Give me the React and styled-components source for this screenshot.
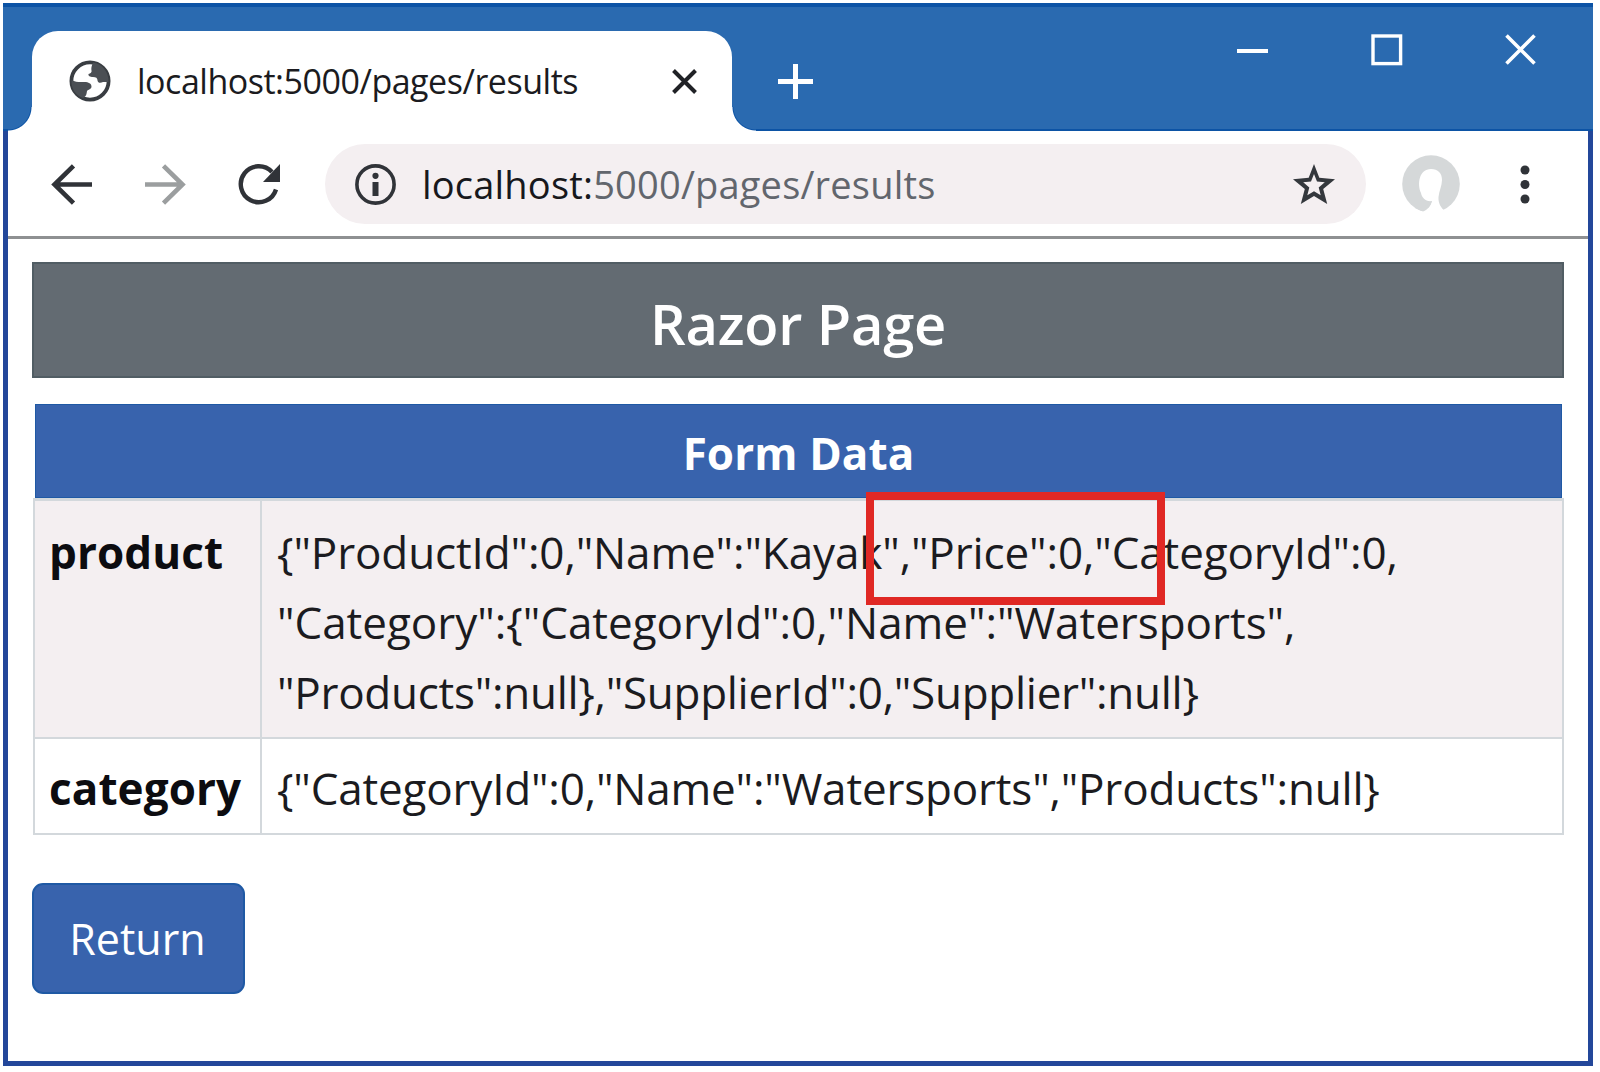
import React from "react";
import styled, { createGlobalStyle } from "styled-components";

const GlobalStyle = createGlobalStyle`
  * { box-sizing: border-box; }
  body {
    margin: 0;
    background: #fff;
    font-family: "Open Sans", "Noto Sans", sans-serif;
    color: #1b1b20;
  }
`;

const Desktop = styled.div`
  width: 1600px;
  height: 1072px;
  padding: 3px 7px 6px 3px;
  overflow: hidden;
`;

const Window = styled.div`
  display: flex;
  flex-direction: column;
  height: 100%;
  border: 5px solid #23479a;
  border-top: 0;
  background: #fff;
`;

const TitleBar = styled.header`
  display: flex;
  align-items: flex-start;
  height: 128px;
  margin: 0 -5px;
  padding: 24px 57px 0 29px;
  background: #2a6ab0;
  border-top: 4px solid #0c53a5;
  border-bottom: 2px solid #0c53a5;
`;

const Tab = styled.div`
  position: relative;
  display: flex;
  align-items: center;
  width: 700px;
  height: 100px;
  padding: 0 35px 0 37px;
  background: #fff;
  border-radius: 26px 26px 0 0;

  &::before,
  &::after {
    content: "";
    position: absolute;
    bottom: 0;
    width: 24px;
    height: 24px;
  }
  &::before {
    right: 100%;
    background: radial-gradient(circle at 0 0, #2a6ab0 22px, #0c53a5 23px, #fff 24px);
  }
  &::after {
    left: 100%;
    background: radial-gradient(circle at 100% 0, #2a6ab0 22px, #0c53a5 23px, #fff 24px);
  }
`;

const TabTitle = styled.span`
  flex: 1;
  margin-left: 26px;
  font-size: 34px;
  line-height: 46px;
  letter-spacing: -0.48px;
  white-space: nowrap;
`;

const Icon = styled.svg`
  display: block;
  flex: none;
  width: ${(p) => p.$w}px;
  height: ${(p) => p.$h || p.$w}px;
  overflow: visible;
`;

const NewTab = styled.div`
  margin: 32px 0 0 45px;
`;

const Controls = styled.div`
  display: flex;
  gap: 103px;
  margin: 3px 0 0 auto;
`;

const Toolbar = styled.nav`
  display: flex;
  align-items: center;
  height: 108px;
  padding: 1px 58px 0 43px;
  border-bottom: 3px solid #8e9092;
`;

const NavButtons = styled.div`
  display: flex;
  align-items: center;
  gap: 53px;
  width: 274px;
`;

const Omnibox = styled.div`
  display: flex;
  align-items: center;
  width: 1041px;
  height: 80px;
  padding: 0 31px 0 30px;
  border-radius: 40px;
  background: #f4eff1;
`;

const Url = styled.span`
  flex: 1;
  margin-left: 26px;
  font-size: 38px;
  line-height: 52px;
  letter-spacing: 0.2px;
  color: #62666d;
  white-space: nowrap;
`;

const Host = styled.span`
  color: #17181c;
`;

const AvatarSlot = styled.div`
  margin: 0 auto 0 36px;
`;

const Page = styled.main`
  flex: 1;
  padding: 23px 24px 0;
`;

const Banner = styled.h1`
  display: flex;
  align-items: center;
  justify-content: center;
  height: 116px;
  margin: 0 0 26px;
  padding-top: 5px;
  border: 2px solid #515d64;
  background: #636b72;
  color: #fff;
  font-size: 56px;
  font-weight: 600;
  line-height: 76px;
  letter-spacing: -0.2px;
`;

const DataTable = styled.section`
  position: relative;
`;

const TableHeader = styled.h2`
  display: flex;
  align-items: center;
  justify-content: center;
  height: 94px;
  margin: 0 2px 0 3px;
  padding-top: 3px;
  background: #3863ad;
  border: 1px solid #1f59a4;
  color: #fff;
  font-size: 44px;
  font-weight: 700;
  line-height: 60px;
  letter-spacing: 0.1px;
`;

const Row = styled.div`
  display: grid;
  grid-template-columns: 227px 1fr;
  height: ${(p) => p.$height}px;
  margin-left: 1px;
  border: 2px solid #d3d8dc;
  border-top-width: ${(p) => (p.$first ? "3px" : "0")};
  background: ${(p) => (p.$first ? "#f4eff1" : "#fff")};
`;

const Key = styled.div`
  padding: ${(p) => p.$top}px 0 0 14px;
  border-right: 2px solid #d3d8dc;
  color: #0c0c10;
  font-size: 44px;
  font-weight: 700;
  line-height: 70px;
  letter-spacing: 0.1px;
`;

const Value = styled.div`
  padding: ${(p) => p.$top}px 0 0 15px;
  font-size: 44px;
  line-height: 70px;
  white-space: nowrap;
`;

const Line = styled.div`
  letter-spacing: ${(p) => p.$track}px;
`;

const Highlight = styled.div`
  position: absolute;
  left: 834px;
  top: 88px;
  width: 299px;
  height: 113px;
  border: 8px solid #e02824;
`;

const ReturnButton = styled.button`
  display: block;
  width: 213px;
  height: 111px;
  margin: 48px 0 0;
  padding: 1px 2px 0 0;
  border: 2px solid #1f59a4;
  border-radius: 11px;
  background: #3863ad;
  color: #fff;
  font: 400 43px/60px "Open Sans", "Noto Sans", sans-serif;
`;

const ROWS = [
  {
    key: "product",
    height: 241,
    top: 16,
    lines: [
      ['{"ProductId":0,"Name":"Kayak","Price":0,"CategoryId":0,', -0.12],
      ['"Category":{"CategoryId":0,"Name":"Watersports",', -0.03],
      ['"Products":null},"SupplierId":0,"Supplier":null}', -0.27],
    ],
  },
  {
    key: "category",
    height: 96,
    top: 14,
    lines: [['{"CategoryId":0,"Name":"Watersports","Products":null}', -0.18]],
  },
];

const Globe = () => (
  <Icon $w={42} viewBox="0 0 42 42">
    <circle cx="21" cy="21" r="18.6" fill="#fff" stroke="#393d42" strokeWidth="3.8" />
    <path
      d="M24 2.5 C22.5 6 22 8.5 22.5 10.5 C23 12.5 21.5 13.5 19.5 14 C19 16 21 17 24 17 C27 17 28.5 18 28.5 20.5 C29 23.5 32 23 34 22 L39.5 22 C40 12 33 3.5 24 2.5 Z"
      fill="#4b4f54"
    />
    <path
      d="M2.5 20 C7 22.5 11 22 15.5 22 C19.5 22 22.5 23.5 22.5 26.5 C22.5 29.5 19 29.5 18 31 C17.5 34 17.5 36 14 38 C6 35 2 28 2.5 20 Z"
      fill="#4b4f54"
    />
  </Icon>
);

const Cross = ({ size, width, color }) => (
  <Icon $w={size} viewBox={`0 0 ${size} ${size}`}>
    <path
      d={`M1.5 1.5 L${size - 1.5} ${size - 1.5} M${size - 1.5} 1.5 L1.5 ${size - 1.5}`}
      stroke={color}
      strokeWidth={width}
    />
  </Icon>
);

const Arrow = ({ color, flip }) => (
  <Icon $w={41} viewBox="0 0 41 41">
    <path
      d="M41 20.5 H4 M22.5 1.8 L3.5 20.5 L22.5 39.2"
      transform={flip ? "translate(41 0) scale(-1 1)" : undefined}
      fill="none"
      stroke={color}
      strokeWidth="4.6"
    />
  </Icon>
);

const Reload = () => (
  <Icon $w={41} viewBox="0 0 41 41">
    <path d="M37 25.5 A18 18 0 1 1 33 8" fill="none" stroke="#303338" strokeWidth="4.4" />
    <path d="M41 0 V18 H24 Z" fill="#303338" />
  </Icon>
);

const Info = () => (
  <Icon $w={41} viewBox="0 0 41 41">
    <circle cx="20.5" cy="20.5" r="18.6" fill="none" stroke="#303338" strokeWidth="3.6" />
    <circle cx="20.5" cy="11.8" r="3.1" fill="#303338" />
    <rect x="17.5" y="18" width="6" height="14" fill="#303338" />
  </Icon>
);

const Star = () => (
  <Icon $w={42} $h={40} viewBox="0 0 42 40">
    <path
      fillRule="evenodd"
      d="M21 0 L26.3 13.7 L42 15.2 L30.2 25 L34.2 40 L21 32 L7.8 40 L11.8 25 L0 15.2 L15.7 13.7 Z M21 10 L18 17.5 L10.2 18.2 L16.3 23.4 L14.3 31.2 L21 27.2 L27.7 31.2 L25.7 23.4 L31.8 18.2 L24 17.5 Z"
      fill="#34383d"
    />
  </Icon>
);

const Avatar = () => (
  <Icon $w={58} viewBox="0 0 58 58">
    <circle cx="29" cy="29" r="28.8" fill="#d5d8d9" />
    <path
      d="M29 14 C36 14 40 18 40 25 C40 31 37 36 36.5 42 C36 48 39 53 43 56 L43 58 H15 L20 56 C25 54 29 51 30 46 C24 47 20 43 19 38 C15 29 17 14 29 14 Z"
      fill="#fff"
    />
    <path d="M13 53 C20 53 26 51 29.5 46 C29 51 26 54.5 21 56.5 Z" fill="#d5d8d9" />
  </Icon>
);

export default function App() {
  return (
    <Desktop>
      <GlobalStyle />
      <Window>
        <TitleBar>
          <Tab>
            <Globe />
            <TabTitle>localhost:5000/pages/results</TabTitle>
            <Cross size={25} width={4} color="#202226" />
          </Tab>
          <NewTab>
            <Icon $w={37} viewBox="0 0 37 37">
              <path d="M18.5 1 V36 M1 18.5 H36" stroke="#fff" strokeWidth="5" />
            </Icon>
          </NewTab>
          <Controls>
            <Icon $w={32} viewBox="0 0 32 32">
              <path d="M1 17 H32" stroke="#fff" strokeWidth="4" />
            </Icon>
            <Icon $w={31} viewBox="0 0 31 31">
              <rect x="2" y="2" width="27.6" height="27.6" fill="none" stroke="#fff" strokeWidth="3.4" />
            </Icon>
            <Cross size={31} width={3.6} color="#fff" />
          </Controls>
        </TitleBar>
        <Toolbar>
          <NavButtons>
            <Arrow color="#303338" />
            <Arrow color="#9b9e9f" flip />
            <Reload />
          </NavButtons>
          <Omnibox>
            <Info />
            <Url>
              <Host>localhost:</Host>5000/pages/results
            </Url>
            <Star />
          </Omnibox>
          <AvatarSlot>
            <Avatar />
          </AvatarSlot>
          <Icon $w={10} $h={40} viewBox="0 0 10 40">
            <circle cx="5" cy="6" r="4.5" fill="#303338" />
            <circle cx="5" cy="20.5" r="4.5" fill="#303338" />
            <circle cx="5" cy="35" r="4.5" fill="#303338" />
          </Icon>
        </Toolbar>
        <Page>
          <Banner>Razor Page</Banner>
          <DataTable>
            <TableHeader>Form Data</TableHeader>
            {ROWS.map((row, i) => (
              <Row key={row.key} $first={i === 0} $height={row.height}>
                <Key $top={row.top}>{row.key}</Key>
                <Value $top={row.top}>
                  {row.lines.map(([text, track]) => (
                    <Line key={text} $track={track}>
                      {text}
                    </Line>
                  ))}
                </Value>
              </Row>
            ))}
            <Highlight />
          </DataTable>
          <ReturnButton type="button">Return</ReturnButton>
        </Page>
      </Window>
    </Desktop>
  );
}
